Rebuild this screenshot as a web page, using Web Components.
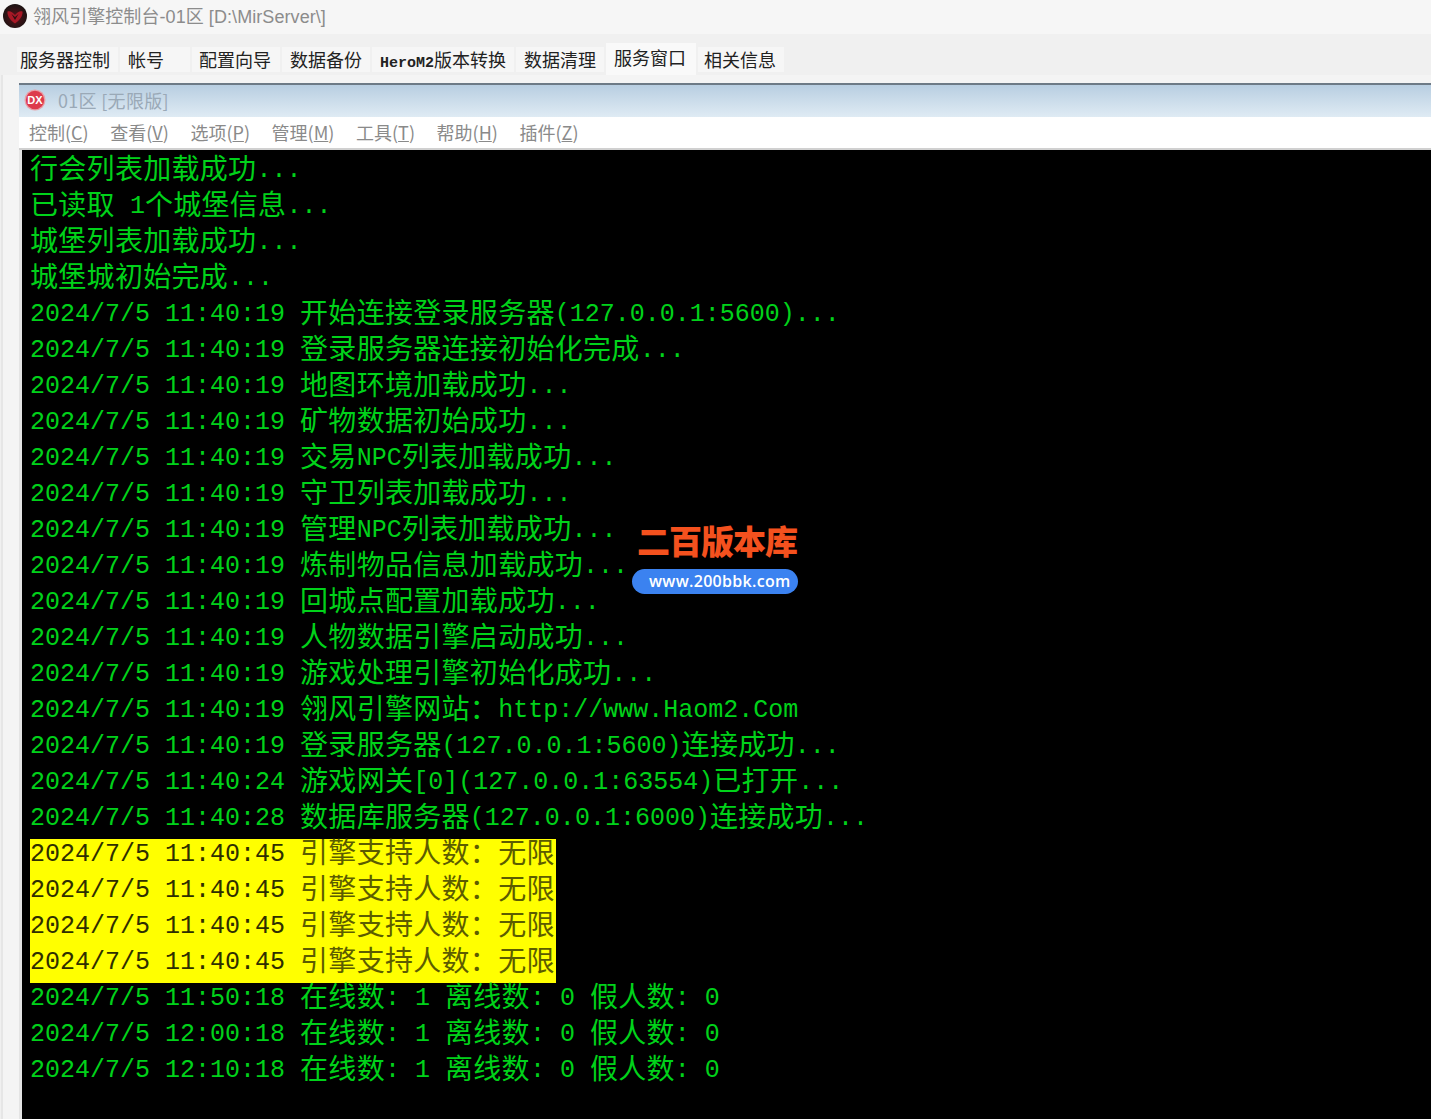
<!DOCTYPE html>
<html lang="zh">
<head>
<meta charset="utf-8">
<title>翎风引擎控制台</title>
<style>
html, body { margin: 0; height: 100%; overflow: hidden; background: #f0f0f0; }
body { font-family: "Noto Sans CJK SC", "Liberation Sans", sans-serif; }
</style>
</head>
<body>
<app-shell>
  <app-title slot="title">翎风引擎控制台-01区 [D:\MirServer\]</app-title>
  <tab-bar slot="tabs">
    <tab-item style="--w:101px;--p:3px">服务器控制</tab-item>
    <tab-item style="--w:70px;--p:8px">帐号</tab-item>
    <tab-item style="--w:88px;--p:7px">配置向导</tab-item>
    <tab-item style="--w:88px;--p:8px">数据备份</tab-item>
    <tab-item style="--w:142px;--p:8px"><span style="font:bold 15px 'Liberation Mono',monospace">HeroM2</span>版本转换</tab-item>
    <tab-item style="--w:88px;--p:8px">数据清理</tab-item>
    <tab-item active style="--w:90px;--p:8px">服务窗口</tab-item>
    <tab-item style="--w:86px;--p:6px">相关信息</tab-item>
  </tab-bar>
  <child-window slot="content">
    <span slot="caption">01区 [无限版]</span>
    <menu-item slot="menu" label="控制" key="C"></menu-item>
    <menu-item slot="menu" label="查看" key="V"></menu-item>
    <menu-item slot="menu" label="选项" key="P"></menu-item>
    <menu-item slot="menu" label="管理" key="M"></menu-item>
    <menu-item slot="menu" label="工具" key="T"></menu-item>
    <menu-item slot="menu" label="帮助" key="H"></menu-item>
    <menu-item slot="menu" label="插件" key="Z"></menu-item>
    <log-console></log-console>
  </child-window>
  <site-badge slot="overlay"></site-badge>
</app-shell>

<script>
const cjk = '"Noto Sans CJK SC", "Liberation Sans", sans-serif';
const latinFirst = '"Liberation Sans", "Noto Sans CJK SC", sans-serif';

class AppShell extends HTMLElement {
  constructor() {
    super();
    this.attachShadow({mode: 'open'}).innerHTML = `
<style>
:host { display: flex; flex-direction: column; position: relative; width: 1431px; height: 1119px; overflow: hidden; background: #f0f0f0; }
.content { flex: 1; min-height: 0; display: flex; padding: 8px 0 0 16px; margin-left: 1px; border-left: 2px solid #e6e6e6; background: #f4f4f4; }
</style>
<slot name="title"></slot>
<slot name="tabs"></slot>
<div class="content"><slot name="content"></slot></div>
<slot name="overlay"></slot>`;
  }
}

class AppTitle extends HTMLElement {
  constructor() {
    super();
    this.attachShadow({mode: 'open'}).innerHTML = `
<style>
:host { display: flex; align-items: center; gap: 6px; height: 34px; padding-left: 3px; background: #f6f6f6; color: #8c8c8c; font: 18px/34px ${latinFirst}; letter-spacing: .07px; white-space: nowrap; }
svg { width: 24px; height: 24px; flex: none; margin-top: -2px; }
</style>
<svg viewBox="0 0 24 24">
  <defs>
    <radialGradient id="g" cx="50%" cy="55%" r="50%">
      <stop offset="0" stop-color="#5a1018"/><stop offset="1" stop-color="#201414"/>
    </radialGradient>
  </defs>
  <circle cx="12" cy="12" r="12" fill="url(#g)"/>
  <path d="M4.5 7.5 C7 6.5 9.5 8 12 11 C14.5 8 17 6.5 19.5 7.5 C20 12 16.5 16.5 12 19.5 C7.5 16.5 4 12 4.5 7.5 Z" fill="#a81826"/>
  <path d="M8.5 10 L12 16 L15.5 10 L12 13 Z" fill="#2c1012"/>
</svg>
<slot></slot>`;
  }
}

class TabBar extends HTMLElement {
  constructor() {
    super();
    this.attachShadow({mode: 'open'}).innerHTML = `
<style>
:host { display: flex; align-items: flex-end; gap: 2px; height: 41px; padding-left: 17px; background: #f0f0f0; box-sizing: border-box; }
</style>
<slot></slot>`;
  }
}

class TabItem extends HTMLElement {
  constructor() {
    super();
    this.attachShadow({mode: 'open'}).innerHTML = `
<style>
:host { display: block; box-sizing: border-box; width: var(--w); height: 25px; margin-bottom: 3px; padding-left: var(--p); background: #f6f6f6; color: #222; font: 18px/24px ${cjk}; white-space: nowrap; }
:host([active]) { height: 32px; margin-bottom: 0; line-height: 28px; background: #f9f9f9; }
</style>
<slot></slot>`;
  }
}

class ChildWindow extends HTMLElement {
  constructor() {
    super();
    this.attachShadow({mode: 'open'}).innerHTML = `
<style>
:host { display: flex; flex-direction: column; flex: 1; min-width: 0; border-top: 2px solid #6d7a86; }
.caption { box-sizing: border-box; display: flex; align-items: center; gap: 12px; height: 32px; padding: 0 0 3px 5px; background: linear-gradient(#b8cee1, #dfebf4); color: #9aa9b7; font: 18px/26px ${cjk}; letter-spacing: .3px; white-space: nowrap; }
.caption svg { width: 22px; height: 22px; flex: none; }
.caption text { font: bold 11px "Liberation Sans", sans-serif; letter-spacing: 0; }
.menu { display: flex; gap: 21.6px; align-items: flex-start; height: 31px; padding-left: 10px; background: #fff; }
.body { flex: 1; min-height: 0; display: flex; padding-left: 3px; background: #e4e4e4; border-top: 2px solid #d0d0d0; }
</style>
<div class="caption">
  <svg viewBox="0 0 22 22">
    <circle cx="11" cy="11" r="10.5" fill="#e8a0a8"/>
    <circle cx="11" cy="11" r="9.2" fill="#dd3a4c"/>
    <text x="11" y="15" text-anchor="middle" fill="#fff">DX</text>
  </svg>
  <slot name="caption"></slot>
</div>
<div class="menu"><slot name="menu"></slot></div>
<div class="body"><slot></slot></div>`;
  }
}

class MenuItem extends HTMLElement {
  constructor() {
    super();
    this.attachShadow({mode: 'open'}).innerHTML = `
<style>
:host { display: block; color: #8a8a8a; font: 18px/30px ${cjk}; white-space: nowrap; }
</style>
${this.getAttribute('label')}(<u>${this.getAttribute('key')}</u>)`;
  }
}

class LogLine extends HTMLElement {
  constructor() {
    super();
    this.attachShadow({mode: 'open'}).innerHTML = `
<style>
:host { display: block; height: 36px; }
.row { display: inline-block; height: 36px; line-height: 24px; white-space: pre; color: #00d21a; vertical-align: top; }
:host([warn]) .row { background: #ffff00; color: #2e2e00; padding-right: 1px; }
:host([warn]) .c { color: #5c5c00; }
.a { font: 25px/24px "Liberation Mono", monospace; vertical-align: 2px; }
.c { font: 28px/24px ${cjk}; letter-spacing: .3px; }
</style>
<div class="row"></div>`;
  }
  connectedCallback() {
    const row = this.shadowRoot.querySelector('.row');
    row.textContent = '';
    for (const run of this.getAttribute('text').match(/[\x00-\x7f]+|[^\x00-\x7f]+/g)) {
      const s = document.createElement('span');
      s.className = /^[\x00-\x7f]/.test(run) ? 'a' : 'c';
      s.textContent = run;
      row.appendChild(s);
    }
  }
}

const logLines = [
  '行会列表加载成功...',
  '已读取 1个城堡信息...',
  '城堡列表加载成功...',
  '城堡城初始完成...',
  '2024/7/5 11:40:19 开始连接登录服务器(127.0.0.1:5600)...',
  '2024/7/5 11:40:19 登录服务器连接初始化完成...',
  '2024/7/5 11:40:19 地图环境加载成功...',
  '2024/7/5 11:40:19 矿物数据初始成功...',
  '2024/7/5 11:40:19 交易NPC列表加载成功...',
  '2024/7/5 11:40:19 守卫列表加载成功...',
  '2024/7/5 11:40:19 管理NPC列表加载成功...',
  '2024/7/5 11:40:19 炼制物品信息加载成功...',
  '2024/7/5 11:40:19 回城点配置加载成功...',
  '2024/7/5 11:40:19 人物数据引擎启动成功...',
  '2024/7/5 11:40:19 游戏处理引擎初始化成功...',
  '2024/7/5 11:40:19 翎风引擎网站：http://www.Haom2.Com',
  '2024/7/5 11:40:19 登录服务器(127.0.0.1:5600)连接成功...',
  '2024/7/5 11:40:24 游戏网关[0](127.0.0.1:63554)已打开...',
  '2024/7/5 11:40:28 数据库服务器(127.0.0.1:6000)连接成功...',
  '!2024/7/5 11:40:45 引擎支持人数：无限',
  '!2024/7/5 11:40:45 引擎支持人数：无限',
  '!2024/7/5 11:40:45 引擎支持人数：无限',
  '!2024/7/5 11:40:45 引擎支持人数：无限',
  '2024/7/5 11:50:18 在线数: 1 离线数: 0 假人数: 0',
  '2024/7/5 12:00:18 在线数: 1 离线数: 0 假人数: 0',
  '2024/7/5 12:10:18 在线数: 1 离线数: 0 假人数: 0'
];

class LogConsole extends HTMLElement {
  constructor() {
    super();
    const root = this.attachShadow({mode: 'open'});
    root.innerHTML = `
<style>
:host { display: block; flex: 1; min-width: 0; box-sizing: border-box; padding: 5px 0 0 8px; background: #000; }
</style>`;
    for (const l of logLines) {
      const line = document.createElement('log-line');
      if (l[0] === '!') line.setAttribute('warn', '');
      line.setAttribute('text', l.replace(/^!/, ''));
      root.appendChild(line);
    }
  }
}

class SiteBadge extends HTMLElement {
  constructor() {
    super();
    this.attachShadow({mode: 'open'}).innerHTML = `
<style>
:host { position: absolute; left: 632px; top: 519px; width: 166px; display: flex; flex-direction: column; align-items: flex-end; }
.name { width: 161px; height: 50px; color: #f4511e; font: 900 33px/42px ${cjk}; letter-spacing: -1px; white-space: nowrap; }
.url { box-sizing: border-box; width: 166px; height: 25px; border-radius: 12.5px; background: #3b82f0; color: #fff; font: 600 16px/24px "Open Sans", "Liberation Sans", sans-serif; letter-spacing: .3px; padding-left: 17px; white-space: nowrap; }
</style>
<div class="name">二百版本库</div>
<div class="url">www.200bbk.com</div>`;
  }
}

customElements.define('app-shell', AppShell);
customElements.define('app-title', AppTitle);
customElements.define('tab-bar', TabBar);
customElements.define('tab-item', TabItem);
customElements.define('child-window', ChildWindow);
customElements.define('menu-item', MenuItem);
customElements.define('log-line', LogLine);
customElements.define('log-console', LogConsole);
customElements.define('site-badge', SiteBadge);
</script>
</body>
</html>
